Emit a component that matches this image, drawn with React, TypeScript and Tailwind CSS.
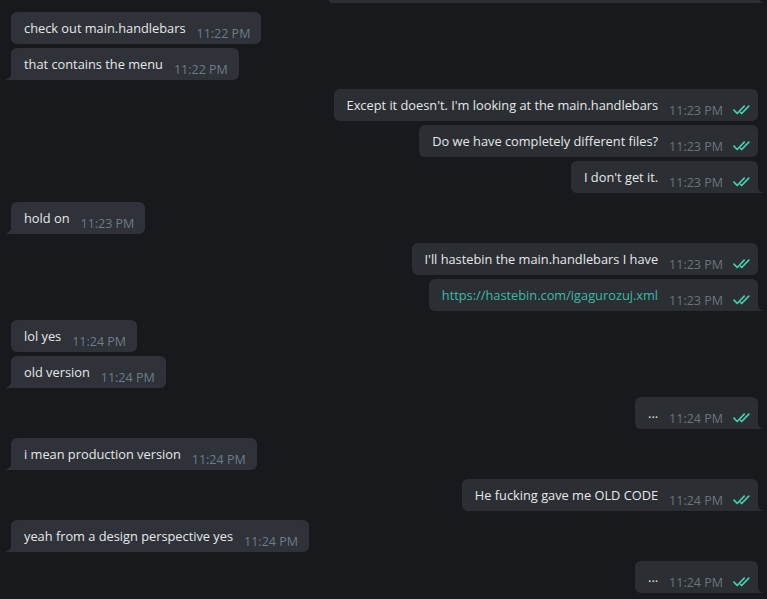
import type { ReactNode } from "react";

type Msg = { text: ReactNode; time: string; out?: boolean; tail?: boolean; link?: boolean };

// groups are separated by a bigger gap than messages inside one group
const groups: Msg[][] = [
  [
    { text: "check out main.handlebars", time: "11:22 PM" },
    { text: "that contains the menu", time: "11:22 PM", tail: true },
  ],
  [
    { text: "Except it doesn't. I'm looking at the main.handlebars", time: "11:23 PM", out: true },
    { text: "Do we have completely different files?", time: "11:23 PM", out: true },
    { text: "I don't get it.", time: "11:23 PM", out: true, tail: true },
  ],
  [{ text: "hold on", time: "11:23 PM", tail: true }],
  [
    { text: "I'll hastebin the main.handlebars I have", time: "11:23 PM", out: true },
    { text: "https://hastebin.com/igagurozuj.xml", time: "11:23 PM", out: true, tail: true, link: true },
  ],
  [
    { text: "lol yes", time: "11:24 PM" },
    { text: "old version", time: "11:24 PM", tail: true },
  ],
  [{ text: "...", time: "11:24 PM", out: true, tail: true }],
  [{ text: "i mean production version", time: "11:24 PM", tail: true }],
  [{ text: "He fucking gave me OLD CODE", time: "11:24 PM", out: true, tail: true }],
  [{ text: "yeah from a design perspective yes", time: "11:24 PM", tail: true }],
  [{ text: "...", time: "11:24 PM", out: true, tail: true }],
];

const IN_BG = "#2f3238";
const OUT_BG = "#2b2f33";

const DoubleCheck = () => (
  <svg width="18" height="10" viewBox="0 0 18 10" fill="none" className="mt-[16px] ml-[10px]">
    <path d="M1 5.2l3.2 3.3L11.2 1.2" stroke="#45cfae" strokeWidth="1.7" strokeLinecap="round" strokeLinejoin="round" />
    <path d="M7.6 7.4l1.1 1.1L15.8 1.2" stroke="#45cfae" strokeWidth="1.7" strokeLinecap="round" strokeLinejoin="round" />
  </svg>
);

const Tail = ({ out, color }: { out?: boolean; color: string }) => (
  <svg
    width="7"
    height="9"
    viewBox="0 0 7 9"
    className={`absolute bottom-0 ${out ? "-right-[6px]" : "-left-[6px]"}`}
  >
    {out ? (
      <path d="M0 0 C0 5 3 8 7 9 L0 9 Z" fill={color} />
    ) : (
      <path d="M7 0 C7 5 4 8 0 9 L7 9 Z" fill={color} />
    )}
  </svg>
);

const Bubble = ({ m }: { m: Msg }) => {
  const bg = m.out ? OUT_BG : IN_BG;
  return (
    <div
      className={`relative flex h-8 items-start pl-[13px] ${m.out ? "self-end pr-[7px] bg-[#2b2f33]" : "self-start pr-[11px] bg-[#2f3238]"} ${
        m.tail ? (m.out ? "rounded-md rounded-br-none" : "rounded-md rounded-bl-none") : "rounded-md"
      }`}
    >
      <span className={`pt-[6px] text-[12.8px] leading-5 whitespace-nowrap ${m.link ? "text-[#3dbaa6]" : "text-[#e6e8ea]"}`}>
        {m.text}
      </span>
      <span className={`ml-[11px] pt-[14px] text-[12.5px] leading-4 whitespace-nowrap ${m.out ? "text-[#6d747b]" : "text-[#6d7c8a]"}`}>
        {m.time}
      </span>
      {m.out && <DoubleCheck />}
      {m.tail && <Tail out={m.out} color={bg} />}
    </div>
  );
};

export default function App() {
  return (
    <div
      className="h-screen w-full overflow-hidden bg-[#18191d] pl-[11px] pr-[9px]"
      style={{ fontFamily: '"Open Sans", "Noto Sans", sans-serif' }}
    >
      <div className="flex flex-col gap-[9px]">
        {/* last bubble of the previous group, mostly scrolled away */}
        <div className="relative ml-auto h-[3px] w-[429px] rounded-bl-md bg-[#2b2f33]">
          <Tail out color={OUT_BG} />
        </div>
        {groups.map((g, i) => (
          <div key={i} className="flex flex-col gap-1">
            {g.map((m, j) => (
              <Bubble key={j} m={m} />
            ))}
          </div>
        ))}
      </div>
    </div>
  );
}
